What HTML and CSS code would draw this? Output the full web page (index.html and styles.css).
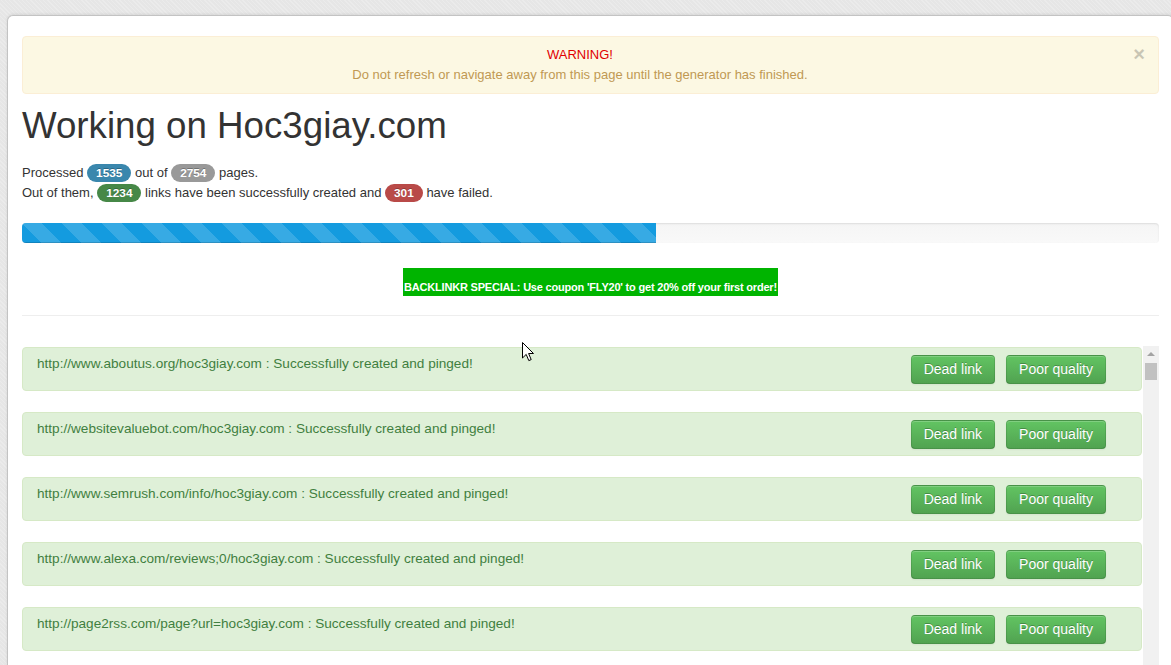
FILE: index.html
```html
<!DOCTYPE html>
<html lang="en">
<head>
    <meta charset="UTF-8">
    <title>Working on Hoc3giay.com</title>
    <link rel="stylesheet" href="styles.css">
</head>
<body>

    <div class="panel">
        <div class="alert alert-warning">
            <span class="close">&times;</span>
            <p class="warn-title">WARNING!</p>
            <p>Do not refresh or navigate away from this page until the generator has finished.</p>
        </div>

        <h1>Working on Hoc3giay.com</h1>

        <p class="stats">
            Processed <span class="badge badge-info">1535</span> out of <span class="badge">2754</span> pages.<br>
            Out of them, <span class="badge badge-success">1234</span> links have been successfully created and <span class="badge badge-important">301</span> have failed.
        </p>

        <div class="progress progress-striped">
            <div class="bar" style="width: 55.74%"></div>
        </div>

        <div class="promo">
            <span>BACKLINKR SPECIAL: Use coupon 'FLY20' to get 20% off your first order!</span>
        </div>

        <hr>

        <div class="results-box">
            <!-- results get appended here -->
            <div class="results" id="results"></div>
            <div class="scrollbar">
                <span class="arrow-up"></span>
                <span class="thumb" id="thumb"></span>
            </div>
        </div>
    </div>

    <svg class="cursor" width="13" height="20" viewBox="0 0 13 20">
        <path d="M0.5 0.5 L0.5 16 L4.2 12.4 L6.8 18.6 L9.2 17.6 L6.6 11.5 L11.5 11.5 Z" fill="#fff" stroke="#000" stroke-width="1" stroke-linejoin="round"/>
    </svg>

    <script src="script.js"></script>
</body>
</html>
```

FILE: styles.css
```css
html, body {
    margin: 0;
    overflow: hidden;
}
body {
    font-family: "Liberation Sans", Arial, sans-serif;
    font-size: 13px;
    line-height: 20px;
    color: #333;
    background-color: #e6e6e6;
    background-image: repeating-linear-gradient(45deg, rgba(255,255,255,0.2) 0 1px, transparent 1px 3px);
    padding: 15px 0 0 7px;
}
.panel {
    width: 1137px;
    padding: 20px 14px 0 14px;
    background: #fff;
    border: 1px solid #c3c3c3;
    border-bottom: none;
    border-radius: 6px 6px 0 0;
    box-shadow: 0 -1px 3px rgba(0,0,0,0.08);
}
p {
    margin: 0;
}

/* warning box */
.alert {
    position: relative;
    padding: 8px 35px 8px 14px;
    border: 1px solid;
    border-radius: 4px;
}
.alert-warning {
    background-color: #fcf8e3;
    border-color: #fbeed5;
    color: #c09853;
    text-align: center;
}
.warn-title {
    color: #e00000;
}
.close {
    position: absolute;
    top: 7px;
    right: 13px;
    font-size: 20px;
    font-weight: bold;
    line-height: 20px;
    color: #000;
    opacity: 0.2;
}

h1 {
    margin: 12px 0 17px;
    font-size: 36.7px;
    font-weight: normal;
    line-height: 40px;
    color: #333;
}

/* badges */
.badge {
    display: inline-block;
    padding: 2px 9px;
    font-size: 11.844px;
    font-weight: bold;
    line-height: 14px;
    color: #fff;
    text-shadow: 0 -1px 0 rgba(0,0,0,0.25);
    background-color: #999;
    border-radius: 9px;
    vertical-align: baseline;
}
.badge-info { background-color: #3a87ad; }
.badge-success { background-color: #468847; }
.badge-important { background-color: #b94a48; }

/* progress */
.progress {
    height: 20px;
    margin: 20px 0 25px;
    overflow: hidden;
    background-image: linear-gradient(to bottom, #f5f5f5, #f9f9f9);
    border-radius: 4px;
    box-shadow: inset 0 1px 2px rgba(0,0,0,0.1);
}
.progress .bar {
    height: 100%;
    background-color: #0e90d2;
    background-image: linear-gradient(to bottom, #149bdf, #0480be);
    box-shadow: inset 0 -1px 0 rgba(0,0,0,0.15);
}
.progress-striped .bar {
    background-color: #149bdf;
    background-image: linear-gradient(45deg, rgba(255,255,255,0.15) 25%, transparent 25%, transparent 50%, rgba(255,255,255,0.15) 50%, rgba(255,255,255,0.15) 75%, transparent 75%, transparent);
    background-size: 40px 40px;
}

/* coupon banner */
.promo {
    text-align: center;
}
.promo span {
    display: inline-block;
    width: 375px;
    padding: 12px 0 2px;
    background-color: #00b400;
    color: #fff;
    font-size: 11px;
    font-weight: bold;
    line-height: 14px;
    letter-spacing: -0.2px;
    white-space: nowrap;
}

hr {
    margin: 18px 0 29px;
    border: 0;
    border-top: 1px solid #eee;
    border-bottom: 1px solid #fff;
}

/* results list with its own scrollbar */
.results-box {
    display: flex;
    height: 320px;
}
.results {
    flex: 1;
    overflow: hidden;
    padding-top: 1px;
    margin-right: 1px;
}
.scrollbar {
    width: 16px;
    background-color: #f1f1f1;
    display: flex;
    flex-direction: column;
    align-items: center;
}
.arrow-up {
    width: 0;
    height: 0;
    margin: 6px 0 7px;
    border-left: 4px solid transparent;
    border-right: 4px solid transparent;
    border-bottom: 4px solid #a3a3a3;
}
.thumb {
    width: 12px;
    height: 17px;
    background-color: #c1c1c1;
}

.result {
    display: flex;
    align-items: flex-start;
    justify-content: space-between;
    margin-bottom: 21px;
    padding: 7px 35px 6px 14px;
    border-radius: 4px;
    border: 1px solid;
}
.result-success {
    background-color: #dff0d8;
    border-color: #d6e9c6;
    color: #3f7f40;
}
.result p {
    font-size: 13.6px;
    line-height: 18px;
}
.result .actions {
    display: flex;
    gap: 11px;
}
.btn {
    padding: 4px 12px;
    font-family: inherit;
    font-size: 14px;
    line-height: 19px;
    color: #fff;
    text-shadow: 0 -1px 0 rgba(0,0,0,0.25);
    background-color: #5bb75b;
    background-image: linear-gradient(to bottom, #62c462, #51a351);
    border: 1px solid rgba(0,0,0,0.1);
    border-bottom-color: rgba(0,0,0,0.25);
    border-radius: 4px;
    box-shadow: inset 0 1px 0 rgba(255,255,255,0.2), 0 1px 2px rgba(0,0,0,0.05);
    cursor: pointer;
}
.btn:hover {
    background-image: none;
    background-color: #51a351;
}

.cursor {
    position: absolute;
    left: 522px;
    top: 342px;
}
```

FILE: script.js
```js
const domain = "hoc3giay.com";

const sites = [
    "http://www.aboutus.org/{d}",
    "http://websitevaluebot.com/{d}",
    "http://www.semrush.com/info/{d}",
    "http://www.alexa.com/reviews;0/{d}",
    "http://page2rss.com/page?url={d}",
    "http://www.statscrop.com/www/{d}",
    "http://www.siteadvisor.com/sites/{d}",
    "http://whois.domaintools.com/{d}",
    "http://www.websiteoutlook.com/www.{d}",
    "http://builtwith.com/{d}",
    "http://www.quantcast.com/{d}",
    "http://www.siteprice.org/website-worth/{d}",
    "http://www.cubestat.com/www.{d}",
    "http://www.webstatsdomain.com/domains/{d}",
    "http://www.aboutthedomain.com/{d}",
    "http://www.similarweb.com/website/{d}",
    "http://www.robtex.com/dns/{d}.html",
    "http://www.siteworthtraffic.com/report/{d}",
    "http://www.seoprofiler.com/analyze/{d}",
    "http://www.ipaddress.com/search/{d}",
    "http://www.mywot.com/en/scorecard/{d}",
    "http://www.statshow.com/www/{d}",
    "http://www.websitelooker.com/{d}",
    "http://www.hypestat.com/info/{d}"
];

const list = document.getElementById("results");

for (let i = 0; i < sites.length; i++) {
    let url = sites[i].replace("{d}", domain);

    let row = document.createElement("div");
    row.className = "result result-success";

    let text = document.createElement("p");
    text.textContent = url + " : Successfully created and pinged!";

    let actions = document.createElement("div");
    actions.className = "actions";
    actions.innerHTML = '<button class="btn">Dead link</button><button class="btn">Poor quality</button>';

    row.appendChild(text);
    row.appendChild(actions);
    list.appendChild(row);
}

// mouse wheel scrolls the log, thumb follows
const thumb = document.getElementById("thumb");
list.addEventListener("wheel", function (e) {
    list.scrollTop += e.deltaY;
    let max = list.scrollHeight - list.clientHeight;
    let room = list.clientHeight - 34;
    thumb.style.marginTop = Math.round(list.scrollTop / max * room) + "px";
    e.preventDefault();
});
```
